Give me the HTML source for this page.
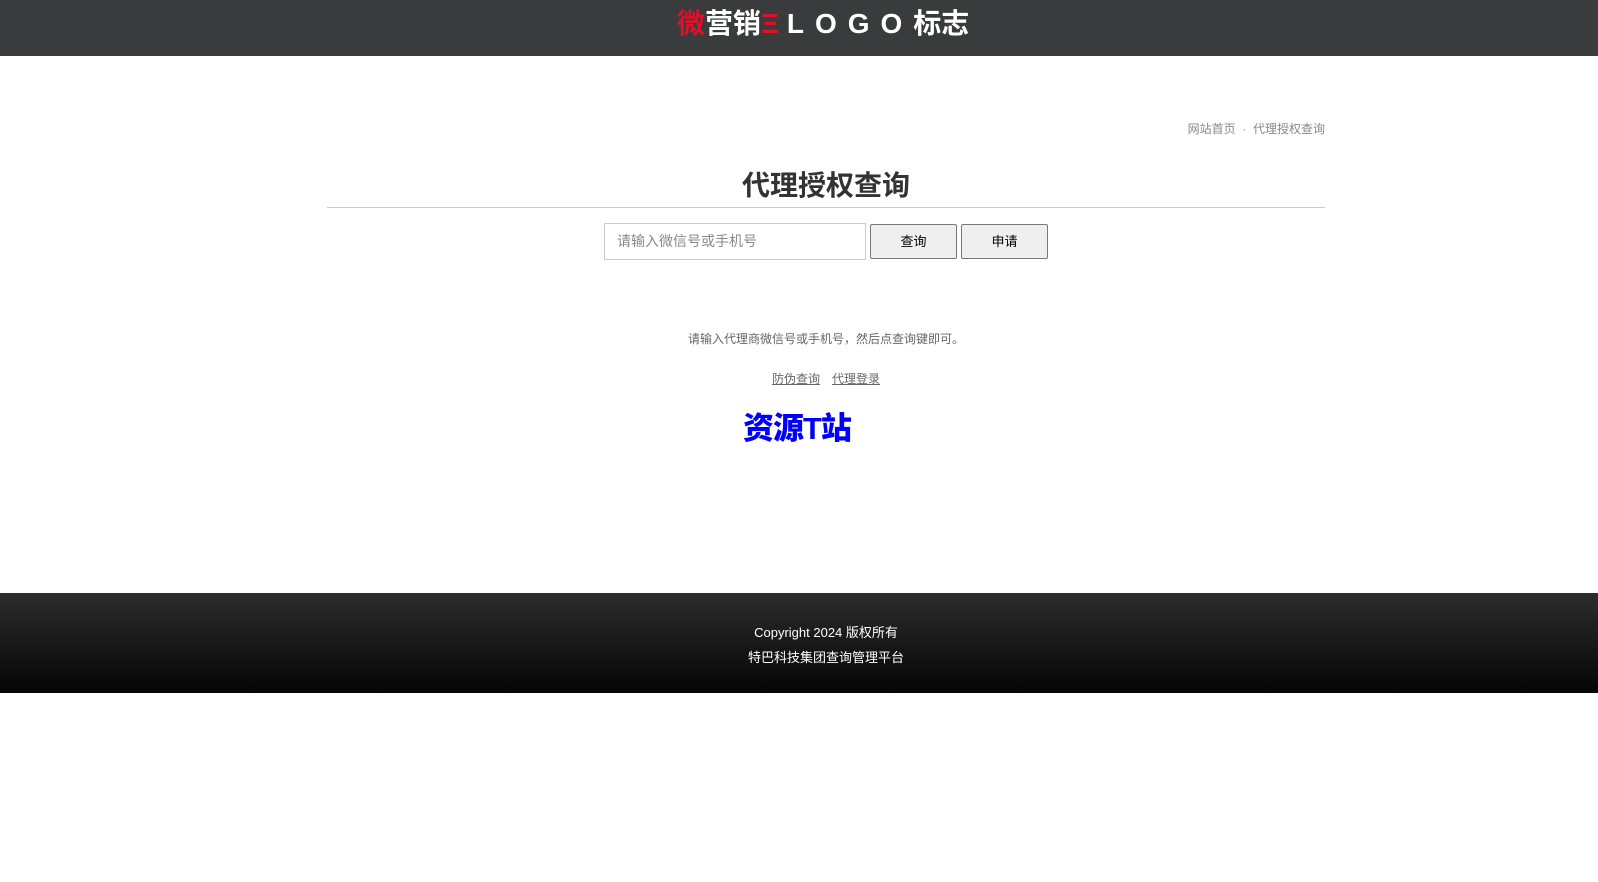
<!DOCTYPE html>
<html><head><meta charset="utf-8"><style>
body{margin:0;width:1598px;height:882px;background:#fff;font-family:"Liberation Sans","Noto Sans CJK SC",sans-serif;position:relative;overflow:hidden}
.hd{position:absolute;left:0;top:0;width:1598px;height:56px;background:#3a3b3d}
.logo{position:absolute;left:677px;top:6px;font-size:28px;font-weight:bold;color:#fff;white-space:nowrap;line-height:36px}
.logo .r{color:#e0102a}
.bc{position:absolute;right:273px;top:120px;font-size:12px;color:#888}
.title{position:absolute;left:327px;width:998px;top:166px;text-align:center;font-size:28px;font-weight:bold;color:#333;line-height:40px}
.line{position:absolute;left:327px;width:998px;top:207px;border-top:1px solid #ccc}
.inp{position:absolute;left:604px;top:223px;width:262px;height:37px;border:1px solid #ccc;box-sizing:border-box;font-size:14px;color:#888;padding-left:12px;line-height:35px}
.btn{position:absolute;top:224px;width:87px;height:35px;border:1px solid #777;border-radius:2px;background:#efefef;box-sizing:border-box;text-align:center;font-size:13px;line-height:33px;color:#000}
.hint{position:absolute;left:327px;width:998px;top:330px;text-align:center;font-size:12px;color:#666}
.links{position:absolute;left:327px;width:998px;top:370px;text-align:center;font-size:12px;color:#666}
.links span{text-decoration:underline;margin:0 6px}
.zy{position:absolute;left:743px;top:408px;font-size:31px;font-weight:900;color:#0000ff;line-height:42px;letter-spacing:-1px}
.ft{position:absolute;left:0;top:593px;width:1598px;height:100px;background:linear-gradient(#2c2c2c,#050505);color:#fff;text-align:center;font-size:13px}
.ft div{position:absolute;left:27px;width:100%}
</style></head><body>
<div class="hd"><div class="logo"><span class="r">微</span>营销<span class="r">Ξ</span> <span style="letter-spacing:11px">LOGO</span>标志</div></div>
<div class="bc">网站首页 &nbsp;·&nbsp; 代理授权查询</div>
<div class="title">代理授权查询</div>
<div class="line"></div>
<div class="inp">请输入微信号或手机号</div>
<div class="btn" style="left:870px">查询</div>
<div class="btn" style="left:961px">申请</div>
<div class="hint">请输入代理商微信号或手机号，然后点查询键即可。</div>
<div class="links"><span>防伪查询</span><span>代理登录</span></div>
<div class="zy">资源T站</div>
<div class="ft"><div style="top:29px">Copyright 2024 版权所有</div><div style="top:54px">特巴科技集团查询管理平台</div></div>
</body></html>
